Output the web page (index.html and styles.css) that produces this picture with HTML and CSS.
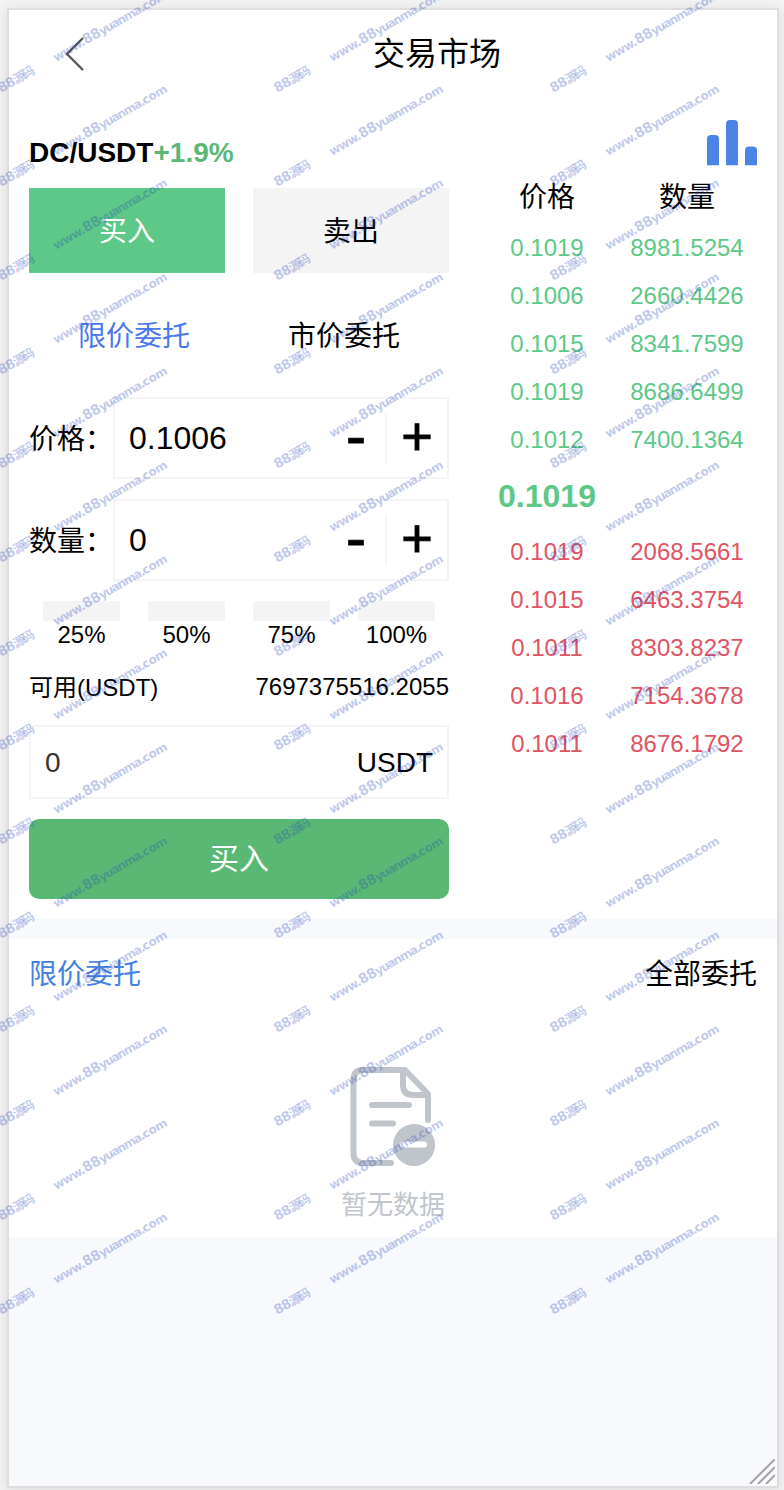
FILE: index.html
```
<!DOCTYPE html>
<html lang="zh">
<head>
    <meta charset="utf-8">
    <title>交易市场</title>
    <link rel="stylesheet" href="styles.css">
</head>
<body>
<div class="phone">
    <!-- header -->
    <div class="header">
        <svg class="back" width="22" height="38" viewBox="0 0 22 38"><path d="M19 3L3 19L19 35" fill="none" stroke="#595959" stroke-width="2.4"/></svg>
        <h1>交易市场</h1>
    </div>

    <div class="trade">
        <!-- order form -->
        <div class="form">
            <div class="pair">DC/USDT<span>+1.9%</span></div>
            <div class="tabs">
                <div class="tab buy">买入</div>
                <div class="tab">卖出</div>
            </div>
            <div class="types">
                <div class="on">限价委托</div>
                <div>市价委托</div>
            </div>
            <div class="row">
                <label>价格：</label>
                <div class="box">
                    <span class="val">0.1006</span>
                    <span class="minus">-</span>
                    <span class="plus">+</span>
                </div>
            </div>
            <div class="row">
                <label>数量：</label>
                <div class="box">
                    <span class="val">0</span>
                    <span class="minus">-</span>
                    <span class="plus">+</span>
                </div>
            </div>
            <div class="percent">
                <div><i></i>25%</div>
                <div><i></i>50%</div>
                <div><i></i>75%</div>
                <div><i></i>100%</div>
            </div>
            <div class="usable"><span>可用(USDT)</span><span class="money">7697375516.2055</span></div>
            <div class="total"><span class="zero">0</span><span>USDT</span></div>
            <div class="submit">买入</div>
        </div>

        <!-- order book -->
        <div class="book">
            <svg class="chart" width="50" height="46" viewBox="0 0 50 46" fill="#4a84e4">
                <path d="M0 45.200V19Q0 15 4 15H8Q12 15 12 19V45.200Z"/>
                <path d="M19 45.200V4Q19 0 23 0H27Q31 0 31 4V45.200Z"/>
                <path d="M38 45.200V30.500Q38 26.500 42 26.500H46Q50 26.500 50 30.500V45.200Z"/>
            </svg>
            <div class="line head"><span>价格</span><span>数量</span></div>
            <div class="line up"><span>0.1019</span><span>8981.5254</span></div>
            <div class="line up"><span>0.1006</span><span>2660.4426</span></div>
            <div class="line up"><span>0.1015</span><span>8341.7599</span></div>
            <div class="line up"><span>0.1019</span><span>8686.6499</span></div>
            <div class="line up"><span>0.1012</span><span>7400.1364</span></div>
            <div class="line now"><span>0.1019</span></div>
            <div class="line down"><span>0.1019</span><span>2068.5661</span></div>
            <div class="line down"><span>0.1015</span><span>6463.3754</span></div>
            <div class="line down"><span>0.1011</span><span>8303.8237</span></div>
            <div class="line down"><span>0.1016</span><span>7154.3678</span></div>
            <div class="line down"><span>0.1011</span><span>8676.1792</span></div>
        </div>
    </div>

    <!-- order list -->
    <div class="orders">
        <div class="orders-head"><span class="blue">限价委托</span><span>全部委托</span></div>
        <div class="empty">
            <svg width="86" height="102" viewBox="0 0 86 102" fill="none" stroke="#c0c5cc" stroke-width="6" stroke-linecap="round" stroke-linejoin="round">
                <path d="M41 97H13Q3.500 97 3.500 87V14Q3.500 4 13 4H55L78 28V54"/>
                <path d="M53 4V19Q53 29 63 29H77"/>
                <path d="M22 39H59M22 57.500H43"/>
                <circle cx="64" cy="79" r="21" fill="#c0c5cc" stroke="none"/>
                <path d="M53 78.500H74" stroke="#fff"/>
            </svg>
            <p>暂无数据</p>
        </div>
    </div>
    <svg class="grip" width="26" height="25" viewBox="0 0 26 25" stroke="#a5a5a7" stroke-width="2"><path d="M1 25L26 0M9 25L26 8M17 25L26 16"/></svg>
</div>

<svg class="mark" id="mark" width="784" height="1490"></svg>

<script>
var mark = document.getElementById("mark");
var ns = "http://www.w3.org/2000/svg";

// parts: [text, length, font size]
function addText(x, y, parts) {
    var t = document.createElementNS(ns, "text");
    t.setAttribute("transform", "translate(" + x + "," + y + ") rotate(-30)");
    for (var p of parts) {
        var s = document.createElementNS(ns, "tspan");
        s.setAttribute("textLength", p[1]);
        s.setAttribute("font-size", p[2]);
        s.textContent = p[0];
        t.appendChild(s);
    }
    mark.appendChild(t);
}

for (var r = 0; r < 14; r++) {
    for (var c = 0; c < 3; c++) {
        addText(c * 276 + 1, r * 94 + 93, [["88", 18, 13.5], ["源码", 23, 12.5]]);
        addText(c * 276 + 56, r * 94 + 62, [["www.", 35, 12], ["88", 19, 14], ["yuanma.", 51, 12], ["com", 27, 12]]);
    }
}
</script>
</body>
</html>
```
FILE: styles.css
```
* {
    box-sizing: border-box;
}

body {
    margin: 0;
    padding: 8px 5px 2px 7px;
    height: 1490px;
    background: #f3f3f3;
    color: #000;
    font-family: "Liberation Sans", "Noto Sans CJK SC", sans-serif;
    font-size: 28px;
    overflow: hidden;
}

.phone {
    position: relative;
    height: 1480px;
    border: 2px solid #dedede;
    background: #f8f9fd;
    box-shadow: 0 2px 12px rgba(0, 0, 0, .1);
}

.header {
    display: flex;
    align-items: center;
    height: 88px;
    padding-left: 55px;
    background: #fff;
}

.header h1 {
    margin: 0 0 0 287px;
    font-size: 32px;
    font-weight: normal;
    line-height: 42px;
}

.trade {
    display: flex;
    justify-content: space-between;
    height: 821px;
    padding: 0 20px;
    background: #fff;
}

.form {
    width: 420px;
}

.pair {
    height: 90px;
    padding-top: 35px;
    line-height: 40px;
    font-weight: bold;
}

.pair span {
    color: #59b974;
}

.tabs {
    display: flex;
    justify-content: space-between;
}

.tab {
    width: 196px;
    height: 85px;
    line-height: 87px;
    text-align: center;
    background: #f4f4f4;
}

.tab.buy {
    color: #fff;
    background: #5dc887;
}

.types {
    display: flex;
    height: 124px;
    line-height: 127px;
    text-align: center;
}

.types div {
    flex: 1;
}

.types .on {
    color: #4877ee;
}

.row {
    display: flex;
    height: 82px;
    margin-bottom: 20px;
}

.row label {
    width: 84px;
    line-height: 85px;
}

.box {
    flex: 1;
    display: flex;
    align-items: center;
    border: 2px solid #f4f4f4;
    padding-left: 14px;
    font-size: 32px;
    line-height: 50px;
}

.val {
    flex: 1;
}

.minus,
.plus {
    height: 50px;
    text-align: center;
    -webkit-text-stroke: 1px #000;
}

.minus {
    width: 58px;
    font-size: 60px;
    line-height: 46px;
}

.plus {
    width: 62px;
    border-left: 2px solid #f4f4f4;
    font-size: 54px;
    line-height: 46px;
}

.percent {
    display: flex;
    height: 60px;
    font-size: 24px;
    line-height: 28px;
    text-align: center;
}

.percent div {
    width: 105px;
}

.percent i {
    display: block;
    height: 20px;
    margin: 0 14px;
    background: #f4f4f4;
}

.usable {
    display: flex;
    justify-content: space-between;
    height: 64px;
    font-size: 24px;
    line-height: 53px;
}

.money {
    line-height: 52px;
}

.total {
    display: flex;
    justify-content: space-between;
    height: 74px;
    padding: 0 14px;
    border: 2px solid #f4f4f4;
    line-height: 72px;
}

.zero {
    color: #333;
}

.submit {
    height: 80px;
    margin-top: 20px;
    border-radius: 10px;
    background: #59b974;
    color: #fff;
    font-size: 30px;
    line-height: 80px;
    text-align: center;
}

.book {
    display: flex;
    flex-direction: column;
    width: 280px;
    padding-top: 22px;
    font-size: 24px;
    line-height: 50px;
}

.chart {
    align-self: flex-end;
}

.line {
    display: grid;
    grid-template-columns: 1fr 1fr;
    height: 48px;
    text-align: center;
}

.head {
    height: 57px;
    font-size: 28px;
    line-height: 63px;
}

.up,
.now {
    color: #5dc887;
}

.down {
    color: #e15361;
}

.now {
    height: 64px;
    font-size: 32px;
    font-weight: bold;
    line-height: 66px;
}

.orders {
    height: 318px;
    border-top: 20px solid #f8f9fd;
    background: #fff;
}

.orders-head {
    display: flex;
    justify-content: space-between;
    height: 68px;
    padding: 0 20px;
    line-height: 71px;
}

.blue {
    color: #4581e3;
}

.empty {
    padding-top: 59px;
    text-align: center;
}

.empty svg {
    display: block;
    margin: 0 auto;
}

.empty p {
    margin: 18px 0 0;
    color: #c0c5cc;
    font-size: 26px;
    line-height: 38px;
}

/* resize handle in the corner */
.grip {
    position: absolute;
    right: 2px;
    bottom: 2px;
}

.mark {
    position: absolute;
    left: 0;
    top: 0;
    fill: rgba(33, 63, 187, .28);
    font-family: "DejaVu Sans", "Noto Sans CJK SC", sans-serif;
    font-weight: bold;
    pointer-events: none;
}
```
